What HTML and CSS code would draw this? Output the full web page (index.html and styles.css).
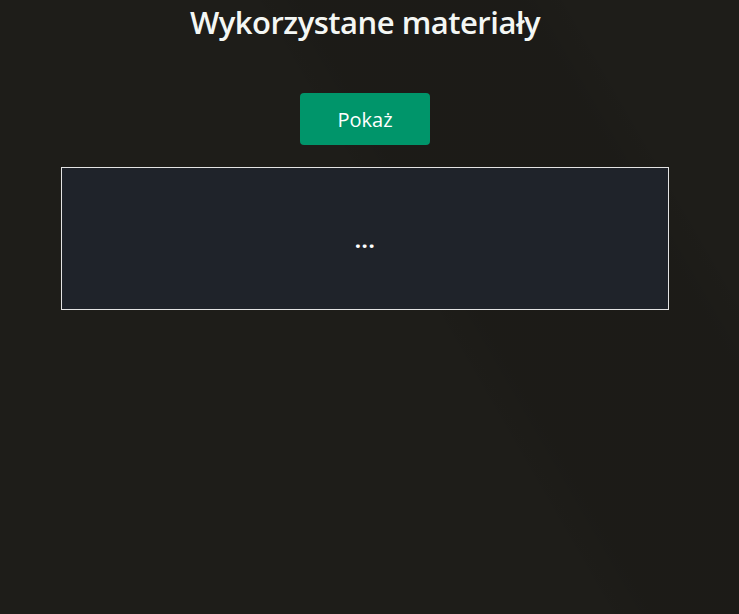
FILE: index.html
```html
<!DOCTYPE html>
<html lang="pl">
<head>
<meta charset="utf-8">
<title>Wykorzystane materiały</title>
<link rel="stylesheet" href="styles.css">
</head>
<body>
<main class="page">
  <h1 class="title">Wykorzystane materiały</h1>
  <button class="show-btn" type="button">Pokaż</button>
  <section class="materials">
    <span class="dots">...</span>
  </section>
</main>
</body>
</html>
```

FILE: styles.css
```css
html, body {
  margin: 0;
  padding: 0;
  height: 100%;
}
body {
  background-color: #1e1d19;
  background-image: linear-gradient(60deg, rgba(0,0,0,0) 0%, rgba(0,0,0,0) 55%, rgba(0,0,0,0.07) 60%, rgba(0,0,0,0.07) 80%, rgba(0,0,0,0) 85%);
  font-family: "Open Sans", "Noto Sans", sans-serif;
  color: #fff;
}
.page {
  display: flex;
  flex-direction: column;
  align-items: center;
  padding-top: 2px;
  padding-right: 9px;
}
.title {
  margin: 0;
  font-size: 31px;
  font-weight: 600;
  line-height: 41px;
  letter-spacing: -0.5px;
  color: #f4f7f4;
}
.show-btn {
  margin-top: 50px;
  width: 130px;
  height: 52px;
  background: #00956a;
  border: none;
  border-radius: 4px;
  color: #fff;
  font-family: "Open Sans", "Noto Sans", sans-serif;
  font-size: 20px;
  font-weight: 400;
  cursor: pointer;
}
.materials {
  margin-top: 22px;
  width: 606px;
  height: 141px;
  border: 1px solid #e4e4e4;
  background: #1f232a;
  display: flex;
  align-items: center;
  justify-content: center;
}
.dots {
  font-size: 22px;
  font-weight: 700;
  line-height: 1;
  letter-spacing: 0.5px;
  color: #fff;
}
```
